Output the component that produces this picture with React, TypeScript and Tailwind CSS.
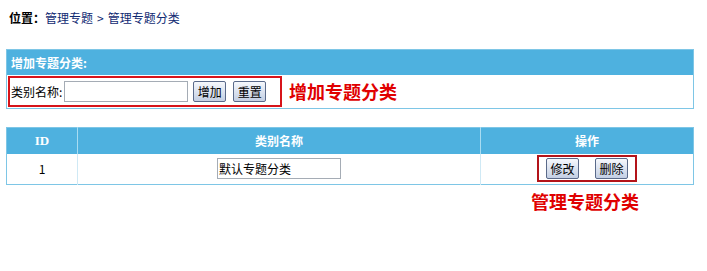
import React from 'react';

const font = { fontFamily: '"Noto Sans CJK SC", "Liberation Sans", sans-serif' };

function Btn({ label }: { label: string }) {
  return (
    <button className="h-[21px] w-[33px] rounded-[2px] border border-[#5a6a8a] bg-gradient-to-b from-[#f6f8fc] to-[#c3cfe4] text-[12px] leading-none text-black">
      {label}
    </button>
  );
}

export default function App() {
  return (
    <div className="h-[271px] w-[707px] bg-white text-[12px] text-black" style={font}>
      <div className="pl-[9px] pt-[10px] leading-[16px]">
        <span className="font-bold">位置：</span>
        <span className="text-[#102a72]">管理专题</span>
        <span className="mx-[4px] text-[#102a72]">&gt;</span>
        <span className="text-[#102a72]">管理专题分类</span>
      </div>

      {/* add panel */}
      <div className="ml-[6px] mt-[23px] w-[688px] border border-[#7ec6e6]">
        <div className="flex h-[25px] items-center bg-[#4eb1df] pl-[4px] text-[12px] font-bold text-white">
          增加专题分类:
        </div>
        <div className="flex h-[33px] items-center">
          <div className="ml-[1px] flex h-[31px] w-[274px] items-center border-2 border-[#d7141a] pl-[1px]">
            <span className="mr-[2px]">类别名称:</span>
            <input className="h-[21px] w-[124px] border border-[#a5acb5] bg-white" />
            <span className="ml-[5px]"><Btn label="增加" /></span>
            <span className="ml-[7px]"><Btn label="重置" /></span>
          </div>
          <span className="ml-[7px] text-[18px] font-bold text-[#e00000]">增加专题分类</span>
        </div>
      </div>

      {/* list table */}
      <table className="ml-[6px] mt-[18px] w-[688px] border-collapse border border-[#7ec6e6]">
        <thead>
          <tr className="h-[26px] bg-[#4eb1df] text-[12px] font-bold text-white">
            <th
              className="w-[71px] border-r border-[#a8dcf2] text-[13px] font-bold"
              style={{ fontFamily: '"Liberation Serif", serif' }}
            >
              ID
            </th>
            <th className="w-[403px] border-r border-[#a8dcf2] font-bold">类别名称</th>
            <th className="font-bold">操作</th>
          </tr>
        </thead>
        <tbody>
          <tr className="h-[31px]">
            <td className="border-r border-[#cfe9f5] text-center">1</td>
            <td className="border-r border-[#cfe9f5] text-center">
              <input
                defaultValue="默认专题分类"
                className="h-[21px] w-[124px] border border-[#a5acb5] bg-white px-[1px] text-[12px]"
                style={font}
              />
            </td>
            <td className="relative text-center">
              <div className="inline-flex h-[27px] w-[100px] items-center justify-center gap-[16px] border-2 border-[#b3141a]">
                <Btn label="修改" />
                <Btn label="删除" />
              </div>
              <div className="absolute left-[50px] top-[34px] whitespace-nowrap text-[18px] font-bold text-[#e00000]">
                管理专题分类
              </div>
            </td>
          </tr>
        </tbody>
      </table>
    </div>
  );
}
